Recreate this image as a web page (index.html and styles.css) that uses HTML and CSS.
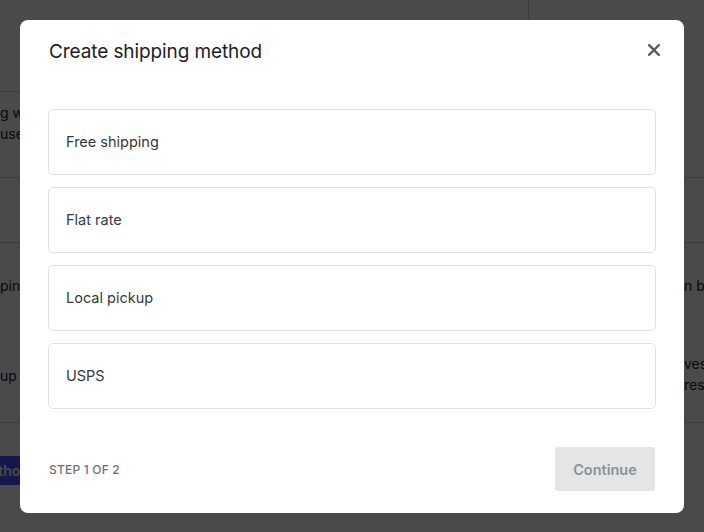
FILE: index.html
```html
<!DOCTYPE html>
<html lang="en">
<head>
<meta charset="utf-8">
<title>Create shipping method</title>
<link rel="stylesheet" href="styles.css">
</head>
<body>
<div class="page">
  <div class="topbar">
    <div class="topbar-main"></div>
    <div class="topbar-side"></div>
  </div>
  <div class="row row-intro">
    <div class="cell-left">
      <p class="bg-text">g when customers check out,</p>
      <p class="bg-text">use the rates below.</p>
    </div>
    <div class="cell-right"></div>
  </div>
  <div class="row row-spacer"></div>
  <div class="row row-methods">
    <div class="cell-left methods-left">
      <p class="bg-text">ping rates</p>
      <p class="bg-text">up locations</p>
    </div>
    <div class="cell-right methods-right">
      <p class="bg-text">n be set</p>
      <p class="bg-text">ves and</p>
      <p class="bg-text">res here</p>
    </div>
  </div>
  <div class="row-actions">
    <div class="action-cell">
      <button class="bg-button" type="button">Add shipping method</button>
    </div>
  </div>
</div>

<div class="overlay">
  <div class="modal" role="dialog" aria-labelledby="modal-title">
    <div class="modal-header">
      <h2 id="modal-title" class="modal-title">Create shipping method</h2>
      <button class="close-btn" type="button" aria-label="Close">
        <svg width="12" height="12" viewBox="0 0 12 12" aria-hidden="true">
          <path d="M1.2 1.2 L10.8 10.8 M10.8 1.2 L1.2 10.8" stroke="#5c5f62" stroke-width="2.4" stroke-linecap="square" fill="none"/>
        </svg>
      </button>
    </div>
    <ul class="options">
      <li class="option">Free shipping</li>
      <li class="option">Flat rate</li>
      <li class="option">Local pickup</li>
      <li class="option">USPS</li>
    </ul>
    <div class="modal-footer">
      <span class="step">Step 1 of 2</span>
      <button class="continue-btn" type="button" disabled>Continue</button>
    </div>
  </div>
</div>
</body>
</html>
```
FILE: styles.css
```css
* {
  box-sizing: border-box;
}

html, body {
  margin: 0;
  padding: 0;
}

body {
  width: 704px;
  height: 532px;
  overflow: hidden;
  background: #ffffff;
  font-family: Inter, "Noto Sans", "Liberation Sans", sans-serif;
  color: #202223;
}

/* ---------- background page ---------- */
.page {
  display: flex;
  flex-direction: column;
  height: 100%;
}

.topbar {
  display: grid;
  grid-template-columns: 528px 1fr;
  height: 92px;
}

.topbar-main {
  border-bottom: 1px solid #c9cccf;
}

.topbar-side {
  border-left: 1px solid #c9cccf;
}

.row {
  display: grid;
  grid-template-columns: 1fr 20px;
  border-bottom: 1px solid #c9cccf;
}

.row-intro {
  height: 86px;
  padding-top: 10px;
}

.row-spacer {
  height: 65px;
}

.row-methods {
  height: 180px;
}

.cell-left,
.cell-right {
  white-space: nowrap;
  min-width: 0;
}

.bg-text {
  margin: 0;
  font-size: 14px;
  line-height: 21px;
}

.methods-left {
  display: flex;
  flex-direction: column;
  gap: 69px;
  padding-top: 32px;
}

.methods-right {
  display: flex;
  flex-direction: column;
  padding-top: 32px;
}

.methods-right .bg-text:nth-child(2) {
  margin-top: 57px;
}

.row-actions {
  padding-top: 33px;
}

.action-cell {
  width: 45px;
  display: flex;
  justify-content: flex-end;
}

.bg-button {
  flex: none;
  height: 29px;
  padding: 0 16px;
  border: 0;
  border-radius: 3px;
  background: #4552ff;
  color: #ffffff;
  font-family: inherit;
  font-size: 14px;
  font-weight: 600;
  white-space: nowrap;
}

/* ---------- overlay & modal ---------- */
.overlay {
  position: fixed;
  inset: 0;
  background: rgba(0, 0, 0, 0.71);
  display: flex;
  justify-content: center;
  align-items: flex-start;
  padding-top: 20px;
}

.modal {
  width: 664px;
  background: #ffffff;
  border-radius: 8px;
  padding: 20px 28px 22px;
  display: flex;
  flex-direction: column;
}

.modal-header {
  display: flex;
  justify-content: space-between;
  align-items: flex-start;
  height: 24px;
  margin-bottom: 45px;
}

.modal-title {
  margin: 0 0 0 1px;
  font-size: 19px;
  line-height: 24px;
  font-weight: 400;
  color: #202223;
  letter-spacing: -0.1px;
}

.close-btn {
  width: 12px;
  height: 12px;
  padding: 0;
  margin: 4px -4px 0 0;
  border: 0;
  background: none;
  display: flex;
  cursor: pointer;
}

.options {
  list-style: none;
  margin: 0;
  padding: 0;
  display: flex;
  flex-direction: column;
  gap: 12px;
}

.option {
  height: 66px;
  display: flex;
  align-items: center;
  padding-left: 17px;
  padding-bottom: 1px;
  border: 1px solid #e1e3e5;
  border-radius: 5px;
  font-size: 14.5px;
  color: #36383c;
}

.modal-footer {
  margin-top: 38px;
  display: flex;
  justify-content: space-between;
  align-items: center;
}

.step {
  padding-left: 1px;
  font-size: 12px;
  font-weight: 500;
  text-transform: uppercase;
  letter-spacing: 0.2px;
  color: #6d7175;
}

.continue-btn {
  width: 100px;
  height: 44px;
  margin-right: 1px;
  border: 0;
  border-radius: 3px;
  background: #e4e5e7;
  color: #8c9196;
  font-family: inherit;
  font-size: 14.5px;
  font-weight: 600;
}
```
